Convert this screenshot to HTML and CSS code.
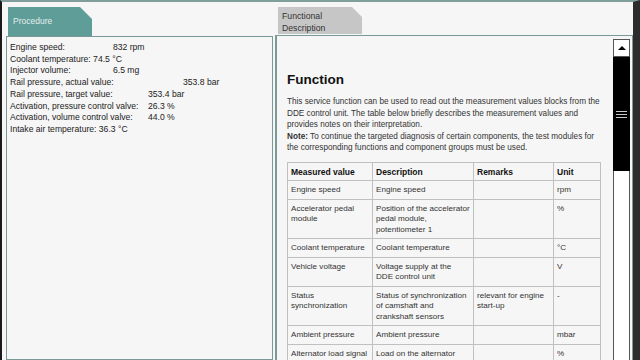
FILE: index.html
```html
<!DOCTYPE html>
<html lang="en">
<head>
  <meta charset="UTF-8" />
  <title>Functional Description</title>
  <link rel="stylesheet" href="styles.css">
</head>
<body>
  <div class="screen">

    <div class="col col-left">
      <div class="tab tab-proc">Procedure</div>
      <div class="panel values">
        <div><span class="lbl lbl-s">Engine speed:</span>832 rpm</div>
        <div>Coolant temperature: 74.5 °C</div>
        <div><span class="lbl lbl-s">Injector volume:</span>6.5 mg</div>
        <div><span class="lbl lbl-l">Rail pressure, actual value:</span>353.8 bar</div>
        <div><span class="lbl lbl-m">Rail pressure, target value:</span>353.4 bar</div>
        <div><span class="lbl lbl-m">Activation, pressure control valve:</span>26.3 %</div>
        <div><span class="lbl lbl-m">Activation, volume control valve:</span>44.0 %</div>
        <div>Intake air temperature: 36.3 °C</div>
      </div>
    </div>

    <div class="col col-right">
      <div class="tab tab-func">Functional<br>Description</div>
      <div class="panel doc-panel">
        <div class="doc">
          <h1>Function</h1>
          <p>This service function can be used to read out the measurement values blocks from the<br>
            DDE control unit. The table below briefly describes the measurement values and<br>
            provides notes on their interpretation.</p>
          <p><b>Note:</b> To continue the targeted diagnosis of certain components, the test modules for<br>
            the corresponding functions and component groups must be used.</p>
          <table>
            <colgroup>
              <col class="c1"><col class="c2"><col class="c3"><col class="c4">
            </colgroup>
            <tr><th>Measured value</th><th>Description</th><th>Remarks</th><th>Unit</th></tr>
            <tr><td>Engine speed</td><td>Engine speed</td><td></td><td>rpm</td></tr>
            <tr><td>Accelerator pedal<br>module</td><td>Position of the accelerator<br>pedal module,<br>potentiometer 1</td><td></td><td>%</td></tr>
            <tr><td>Coolant temperature</td><td>Coolant temperature</td><td></td><td>°C</td></tr>
            <tr><td>Vehicle voltage</td><td>Voltage supply at the<br>DDE control unit</td><td></td><td>V</td></tr>
            <tr><td>Status<br>synchronization</td><td>Status of synchronization<br>of camshaft and<br>crankshaft sensors</td><td>relevant for engine<br>start-up</td><td>-</td></tr>
            <tr><td>Ambient pressure</td><td>Ambient pressure</td><td></td><td>mbar</td></tr>
            <tr><td>Alternator load signal</td><td>Load on the alternator</td><td></td><td>%</td></tr>
          </table>
        </div>
        <div class="scrollbar">
          <div class="sb-up"><span class="arrow"></span></div>
          <div class="sb-thumb">
            <span class="grip"></span><span class="grip"></span><span class="grip"></span>
          </div>
          <div class="sb-track"></div>
        </div>
      </div>
    </div>

  </div>
</body>
</html>
```

FILE: styles.css
```css
body {
  margin: 0;
  background: #222;
  font-family: "Liberation Sans", Arial, sans-serif;
  color: #222;
}
.screen {
  width: 640px;
  height: 360px;
  box-sizing: border-box;
  overflow: hidden;
  display: flex;
  background: #f6f6f6;
  border-top: 2px solid #7f9e9c;
  border-left: 2px solid #1a1a1a;
  border-right: 7px solid #2c2c2c;
  padding-left: 4px;
  padding-top: 5px;
}
.col {
  display: flex;
  flex-direction: column;
}
.col-left {
  width: 267px;
}
.col-right {
  width: 358px;
  margin-left: 2px;
}
.tab {
  box-sizing: border-box;
  width: 84px;
}
.tab-proc {
  height: 29px;
  margin-left: 2px;
  padding: 9px 0 0 5px;
  background: #5f9d99;
  color: #e4eeed;
  font-size: 8.5px;
  line-height: 10px;
  clip-path: polygon(0 0, 72px 0, 84px 12px, 84px 100%, 0 100%);
}
.tab-func {
  height: 28px;
  margin: 0 0 1px 3px;
  padding: 3px 0 0 4px;
  background: #c6c6c6;
  color: #333;
  font-size: 8.7px;
  line-height: 12px;
  clip-path: polygon(0 0, 74px 0, 84px 10px, 84px 100%, 0 100%);
}
.panel {
  flex: 1;
  border: 1px solid #7a9a98;
}
.values {
  padding: 5px 3px;
  font-size: 8.6px;
  line-height: 11.7px;
}
.lbl {
  display: inline-block;
}
.lbl-s { width: 103px; }
.lbl-m { width: 138px; }
.lbl-l { width: 173px; }

.doc-panel {
  display: flex;
  border-left-width: 2px;
}
.doc {
  flex: 1;
  padding: 36px 6px 0 10px;
  white-space: nowrap;
}
.doc h1 {
  margin: 0 0 8px;
  font-size: 13.5px;
  line-height: 16px;
  color: #111;
}
.doc p {
  margin: 0;
  font-size: 8.2px;
  line-height: 11.5px;
  color: #333;
}
.doc table {
  width: 313px;
  margin-top: 8px;
  table-layout: fixed;
  border-collapse: collapse;
  font-size: 8.1px;
  line-height: 10.5px;
  color: #333;
}
.c1 { width: 85px; }
.c2 { width: 101px; }
.c3 { width: 80px; }
.c4 { width: 47px; }
.doc th, .doc td {
  border: 1px solid #c0c0c0;
  padding: 4px 2px 3px 3px;
  text-align: left;
  vertical-align: top;
  overflow: hidden;
}
.doc th {
  font-size: 8.5px;
  color: #111;
}
.scrollbar {
  width: 17px;
  margin: 3px 2px 0 0;
  display: flex;
  flex-direction: column;
}
.sb-up {
  height: 18px;
  box-sizing: border-box;
  border: 1px solid #555;
  background: #fff;
  display: flex;
  align-items: center;
  justify-content: center;
}
.arrow {
  width: 0;
  height: 0;
  border-left: 4px solid transparent;
  border-right: 4px solid transparent;
  border-bottom: 4px solid #000;
}
.sb-thumb {
  height: 114px;
  background: #000;
  display: flex;
  flex-direction: column;
  align-items: center;
  justify-content: center;
  gap: 2px;
}
.grip {
  width: 11px;
  height: 1px;
  background: #c8c8c8;
}
.sb-track {
  flex: 1;
  background: #fff;
  border-left: 1px solid #555;
  border-right: 1px solid #555;
}
```
